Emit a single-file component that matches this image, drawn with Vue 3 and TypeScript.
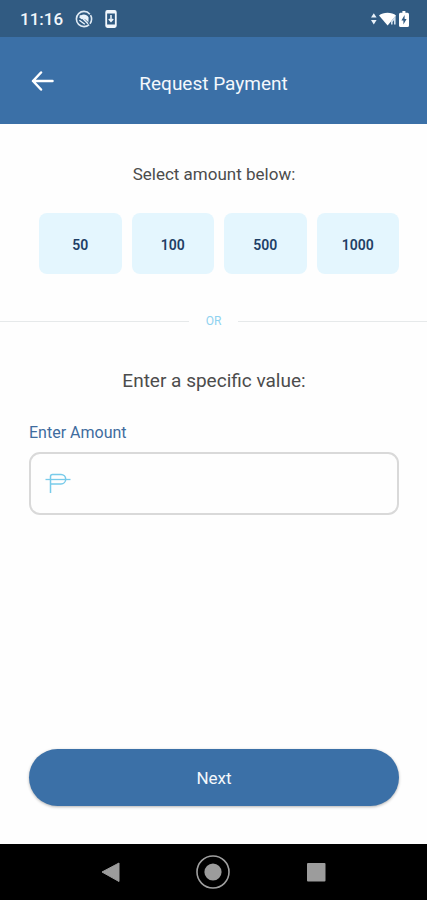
<script setup lang="ts">
import { ref } from 'vue'

const presets: number[] = [50, 100, 500, 1000]
const amount = ref<string>('')

function choose(value: number): void {
  amount.value = String(value)
}
</script>

<template>
  <div class="screen">
    <div class="status">
      <span class="clock">11:16</span>
      <svg class="status-icon" viewBox="0 0 18 18" width="18" height="18" aria-hidden="true">
        <circle cx="9" cy="9" r="7.6" fill="none" stroke="#dfeaf4" stroke-width="1.6" stroke-dasharray="5 1.2 36 1.2 4.4" />
        <path d="M4.2 7.6C5.6 3.8 11.4 3.4 13.6 7.4L13.4 12.2 10.4 9.6C9.4 8.5 7.6 8.4 6.6 9.2Z" fill="#e9f2fa" />
        <path d="M4.4 10.2 9.8 14.2M4.8 5.6 13 13.8" fill="none" stroke="#e9f2fa" stroke-width="1.4" />
      </svg>
      <svg class="status-icon" viewBox="0 0 12 18" width="12" height="18" aria-hidden="true">
        <rect x="1.2" y="1" width="9.6" height="16" rx="1.2" fill="none" stroke="#f2f7fc" stroke-width="1.8" />
        <path d="M1.2 2.2H10.8M1.2 15.8H10.8" stroke="#f2f7fc" stroke-width="2.4" />
        <path d="M6 5V11M3.8 9 6 11.4 8.2 9" fill="none" stroke="#f2f7fc" stroke-width="1.5" />
      </svg>
      <svg class="signals" viewBox="0 0 40 18" width="40" height="18" aria-hidden="true">
        <path d="M1 7.6 3.8 3.2 6.6 7.6ZM1 10 3.8 14.4 6.6 10Z" fill="#e9f2fa" />
        <path d="M9 5.4C13 1.8 22 1.8 26 5.4L17.6 15.6Z" fill="#fff" />
        <path d="M21.8 14.4V11.8L24.8 7.8V14.4" fill="none" stroke="#d3e2ef" stroke-width="1.6" />
        <path d="M30.4 2.8H32.4V1H35.4V2.8H37.6Q39 2.8 39 4.4V15.4Q39 17 37.4 17H30.6Q29 17 29 15.4V4.4Q29 2.8 30.4 2.8Z" fill="#fff" />
        <path d="M34.6 5 31.4 10.4H33.4V14.4L36.6 9H34.6Z" fill="#315b82" />
      </svg>
    </div>

    <header class="header">
      <button class="back" type="button" aria-label="Back">
        <svg viewBox="0 0 24 20" width="24" height="20" aria-hidden="true">
          <path d="M10 1.5 2 10 10 18.500M2 10H21.500" fill="none" stroke="#fff" stroke-width="2.5" stroke-linecap="round" stroke-linejoin="round" />
        </svg>
      </button>
      <h1 class="title">Request Payment</h1>
    </header>

    <main class="content">
      <h2 class="prompt">Select amount below:</h2>
      <div class="presets">
        <button v-for="value in presets" :key="value" class="preset" type="button" @click="choose(value)">
          {{ value }}
        </button>
      </div>

      <div class="divider"><span>OR</span></div>

      <h2 class="prompt large">Enter a specific value:</h2>
      <div class="field">
        <label class="label" for="amount">Enter Amount</label>
        <div class="box">
          <svg viewBox="0 0 26 22" width="26" height="22" aria-hidden="true">
            <path d="M5.5 20V3.5Q5.5 1.500 7.5 1.500H16A4.700 4.700 0 0 1 16 10.900H5.5" fill="none" stroke="#78cbea" stroke-width="1.5" />
            <path d="M0.5 6.500H25.5" stroke="#78cbea" stroke-width="1.3" />
          </svg>
          <input id="amount" v-model="amount" class="input" type="text" inputmode="decimal" />
        </div>
      </div>

      <button class="next" type="button">Next</button>
    </main>

    <nav class="system">
      <button class="key" type="button" aria-label="System back">
        <svg viewBox="0 0 36 36" width="36" height="36" aria-hidden="true">
          <path d="M9 18 26 9V27.500Z" fill="#9c9c9c" stroke="#9c9c9c" stroke-linejoin="round" />
        </svg>
      </button>
      <button class="key" type="button" aria-label="Home">
        <svg viewBox="0 0 36 36" width="36" height="36" aria-hidden="true">
          <circle cx="18" cy="18" r="16" fill="none" stroke="#a0a0a0" stroke-width="1.6" />
          <circle cx="18" cy="18" r="8.6" fill="#9c9c9c" />
        </svg>
      </button>
      <button class="key" type="button" aria-label="Recent apps">
        <svg viewBox="0 0 36 36" width="36" height="36" aria-hidden="true">
          <rect x="9" y="9" width="18.500" height="18.500" rx="1" fill="#9c9c9c" />
        </svg>
      </button>
    </nav>
  </div>
</template>

<style>
body {
  background: #fefefe;
}
</style>

<style scoped>
.screen {
  display: flex;
  flex-direction: column;
  min-height: 100vh;
  background: #fefefe;
  font-family: Roboto, "Liberation Sans", sans-serif;
}

.screen *,
.screen {
  box-sizing: border-box;
}

button {
  padding: 0;
  border: 0;
  background: none;
  font-family: inherit;
  cursor: pointer;
}

svg {
  display: block;
  flex: none;
}

.status {
  display: flex;
  align-items: center;
  gap: 12px;
  height: 37px;
  padding: 0 17px 0 20px;
  background: #315b82;
}

.clock {
  color: #f2f7fc;
  font-size: 17px;
  font-weight: 500;
  line-height: 20px;
}

.signals {
  margin-left: auto;
}

.header {
  display: grid;
  grid-template-columns: 48px 1fr 48px;
  align-items: center;
  height: 87px;
  padding: 0 19px;
  background: #3b70a7;
}

.back {
  display: grid;
  place-items: center;
  height: 48px;
}

.title {
  margin: 0;
  padding-top: 6px;
  color: #f4f8fc;
  font-size: 19px;
  font-weight: 400;
  line-height: 24px;
  text-align: center;
}

.content {
  display: flex;
  flex: 1;
  flex-direction: column;
  padding: 38px 28px 38px 29px;
}

.prompt {
  margin: 0;
  color: #4c4c4c;
  font-size: 17px;
  font-weight: 400;
  line-height: 24px;
  text-align: center;
}

.large {
  font-size: 19px;
}

.presets {
  display: grid;
  grid-template-columns: repeat(4, 1fr);
  gap: 10px;
  margin: 27px 0 0 10px;
}

.preset {
  height: 61px;
  padding-top: 2px;
  border-radius: 8px;
  background: #e4f6fe;
  color: #1f3f66;
  font-size: 14px;
  font-weight: 600;
}

.divider {
  display: flex;
  align-items: center;
  gap: 17px;
  margin: 39px -28px 40px -29px;
  color: #8fd2f0;
  font-size: 12px;
  line-height: 16px;
}

.divider::before,
.divider::after {
  content: "";
  flex: 1;
  height: 1px;
  background: #e6e9ea;
}

.field {
  margin-top: 28px;
}

.label {
  display: block;
  color: #3f6c9e;
  font-size: 16px;
  line-height: 24px;
}

.box {
  display: flex;
  align-items: center;
  gap: 12px;
  height: 63px;
  margin-top: 7px;
  padding: 0 14px;
  border: 2px solid #d9d9d9;
  border-radius: 11px;
}

.input {
  flex: 1;
  min-width: 0;
  height: 100%;
  padding: 0;
  border: 0;
  outline: 0;
  background: transparent;
  color: #3d4145;
  font-family: inherit;
  font-size: 17px;
}

.next {
  height: 57px;
  margin-top: auto;
  border-radius: 29px;
  background: #3b70a7;
  box-shadow: 0 1px 3px rgba(0, 0, 0, 0.3);
  color: #f4f8fc;
  font-size: 17px;
  font-weight: 400;
}

.system {
  display: grid;
  grid-template-columns: repeat(3, 1fr);
  height: 56px;
  padding: 0 60px;
  background: #000;
}

.key {
  display: grid;
  place-items: center;
}
</style>
